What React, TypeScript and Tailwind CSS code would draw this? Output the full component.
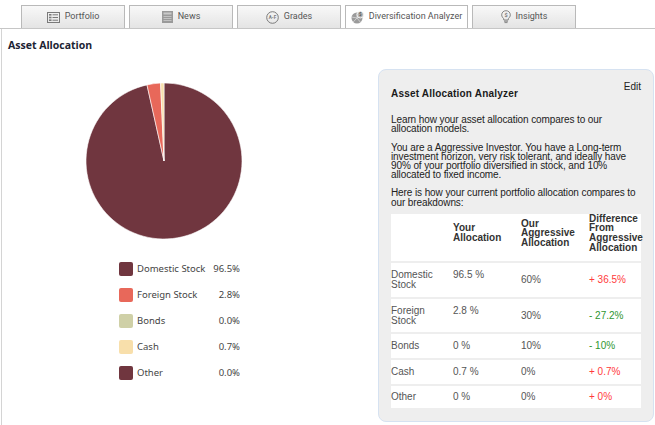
import React from 'react'

const slices = [
  { name: 'Domestic Stock', pct: 96.5, color: '#70363f' },
  { name: 'Foreign Stock', pct: 2.8, color: '#e8685a' },
  { name: 'Bonds', pct: 0.0, color: '#cfd0a7' },
  { name: 'Cash', pct: 0.7, color: '#f8dfab' },
  { name: 'Other', pct: 0.0, color: '#70363f' },
]

function pt(deg: number) {
  const r = (deg * Math.PI) / 180
  return [80 + 78 * Math.sin(r), 80 - 78 * Math.cos(r)]
}

function Pie() {
  let start = 0
  return (
    <svg width="160" height="160" viewBox="0 0 160 160">
      {slices.map((s) => {
        if (s.pct <= 0) return null
        const end = start + (s.pct / 100) * 360
        const [x1, y1] = pt(start)
        const [x2, y2] = pt(end)
        const large = end - start > 180 ? 1 : 0
        const d = `M80,80 L${x1},${y1} A78,78 0 ${large} 1 ${x2},${y2} Z`
        start = end
        return <path key={s.name} d={d} fill={s.color} stroke="#fff" strokeWidth="0.6" strokeLinejoin="round" />
      })}
    </svg>
  )
}

const PortfolioIcon = () => (
  <svg width="13" height="11" viewBox="0 0 13 11">
    <rect x="0.5" y="0.5" width="12" height="10" fill="none" stroke="#7a7a7a" />
    <rect x="2" y="2" width="2.5" height="1.6" fill="#7a7a7a" />
    <rect x="5.5" y="2.3" width="5.5" height="1" fill="#7a7a7a" />
    <rect x="2" y="4.7" width="2.5" height="1.6" fill="#7a7a7a" />
    <rect x="5.5" y="5" width="5.5" height="1" fill="#7a7a7a" />
    <rect x="2" y="7.4" width="2.5" height="1.6" fill="#7a7a7a" />
    <rect x="5.5" y="7.7" width="5.5" height="1" fill="#7a7a7a" />
  </svg>
)

const NewsIcon = () => (
  <svg width="11" height="12" viewBox="0 0 11 12">
    <rect x="0" y="0" width="11" height="12" fill="#9a9a9a" />
    <rect x="1.5" y="1.5" width="8" height="2" fill="#c9c9c9" />
    <rect x="1.5" y="5" width="8" height="1" fill="#c2c2c2" />
    <rect x="1.5" y="7" width="8" height="1" fill="#c2c2c2" />
    <rect x="1.5" y="9" width="8" height="1" fill="#c2c2c2" />
  </svg>
)

const GradesIcon = () => (
  <svg width="13" height="13" viewBox="0 0 13 13">
    <circle cx="6.5" cy="6.5" r="5.8" fill="none" stroke="#7a7a7a" strokeWidth="1" />
    <text x="6.5" y="8.2" textAnchor="middle" fontSize="4.6" fontWeight="bold" fill="#7a7a7a" fontFamily="Roboto, sans-serif">
      A-F
    </text>
  </svg>
)

const DiversIcon = () => (
  <svg width="13" height="13" viewBox="0 0 13 13">
    <circle cx="6" cy="7" r="5.5" fill="#9b9b9b" />
    <path d="M6 7 L6 1.5 M6 7 L11.2 5.5 M6 7 L9.5 11.3 M6 7 L2.2 11 M6 7 L0.6 6" stroke="#d8d8d8" strokeWidth="0.8" />
    <circle cx="9.3" cy="3.7" r="3.3" fill="#b5b5b5" stroke="#fff" strokeWidth="0.8" />
    <text x="9.3" y="5.3" textAnchor="middle" fontSize="4.5" fontWeight="bold" fill="#555" fontFamily="Roboto, sans-serif">
      $
    </text>
  </svg>
)

const InsightsIcon = () => (
  <svg width="10" height="14" viewBox="0 0 10 14">
    <path d="M5 0.7 C2.5 0.7 0.7 2.5 0.7 4.9 C0.7 6.6 1.7 7.6 2.6 8.6 L2.8 10 L7.2 10 L7.4 8.6 C8.3 7.6 9.3 6.6 9.3 4.9 C9.3 2.5 7.5 0.7 5 0.7 Z" fill="none" stroke="#7a7a7a" strokeWidth="0.9" />
    <path d="M3 11.2 L7 11.2 M3.5 12.6 L6.5 12.6" stroke="#7a7a7a" strokeWidth="0.9" />
    <text x="5" y="7" textAnchor="middle" fontSize="5.5" fontWeight="bold" fill="#7a7a7a" fontFamily="Roboto, sans-serif">
      $
    </text>
  </svg>
)

const tabs = [
  { label: 'Portfolio', icon: <PortfolioIcon />, w: 'w-[104px]' },
  { label: 'News', icon: <NewsIcon />, w: 'w-[104px]' },
  { label: 'Grades', icon: <GradesIcon />, w: 'w-[104px]' },
  { label: 'Diversification Analyzer', icon: <DiversIcon />, w: 'w-[123px]', active: true },
  { label: 'Insights', icon: <InsightsIcon />, w: 'w-[104px]' },
]

const rows = [
  { label: ['Domestic', 'Stock'], yours: '96.5 %', ours: '60%', diff: '+ 36.5%', up: true, h: 'h-[36.4px]' },
  { label: ['Foreign', 'Stock'], yours: '2.8 %', ours: '30%', diff: '- 27.2%', up: false, h: 'h-[35px]' },
  { label: ['Bonds'], yours: '0 %', ours: '10%', diff: '- 10%', up: false, h: 'h-[25.3px]' },
  { label: ['Cash'], yours: '0.7 %', ours: '0%', diff: '+ 0.7%', up: true, h: 'h-[26.3px]' },
  { label: ['Other'], yours: '0 %', ours: '0%', diff: '+ 0%', up: true, h: 'h-[22.4px]', last: true },
]

export default function App() {
  return (
    <div className="w-[655px] h-[425px] bg-white overflow-hidden font-['Liberation_Sans',Arial,sans-serif]">
      {/* tabs */}
      <div className="flex gap-[4px] pl-[21px] pt-[5px] border-b border-[#c6c6c6]">
        {tabs.map((t) => (
          <div
            key={t.label}
            className={`${t.w} h-[23px] flex items-center justify-center gap-[5px] border border-b-0 border-[#b9b9b9] font-['Roboto',sans-serif] text-[9px] text-[#555] ${
              t.active ? 'bg-white' : 'bg-gradient-to-b from-[#f8f8f8] to-[#e4e4e4]'
            }`}
          >
            {t.icon}
            <span>{t.label}</span>
          </div>
        ))}
      </div>

      <div className="flex ml-[1px] border-l border-[#d4d4d4] h-[396px]">
        {/* left column */}
        <div className="w-[376px] shrink-0 pt-[10px]">
          <div className="pl-[6px] h-[12px] leading-[12px] text-[10.5px] font-bold text-[#1c2433] font-['Open_Sans',sans-serif]">
            Asset Allocation
          </div>
          <div className="mt-[30px] ml-[82px]">
            <Pie />
          </div>
          <div className="mt-[15px] ml-[117px] w-[121px] flex flex-col font-['Noto_Sans',sans-serif] text-[9.5px] text-[#444]">
            {slices.map((s) => (
              <div key={s.name} className="h-[26px] flex items-center">
                <span className="w-[14px] h-[14px] rounded-[2px] mr-[4px]" style={{ backgroundColor: s.color }} />
                <span className="flex-1">{s.name}</span>
                <span>{s.pct.toFixed(1)}%</span>
              </div>
            ))}
          </div>
        </div>

        {/* analyzer panel */}
        <div className="w-[276px] shrink-0 mt-[40px] self-start rounded-[8px] border border-[#d6e2f1] bg-[#eeeeee] px-[12px] pt-[12px] pb-[13px] text-[10px] leading-[9.2px] text-[#222]">
          <div className="flex justify-between items-start">
            <div className="mt-[7px] font-bold tracking-[0.2px] text-[#1a1a1a]">Asset Allocation Analyzer</div>
            <div>Edit</div>
          </div>
          <p className="mt-[17px] tracking-[-0.1px]">Learn how your asset allocation compares to our allocation models.</p>
          <p className="mt-[9px] tracking-[-0.1px]">
            You are a Aggressive Investor. You have a Long-term investment horizon, very risk tolerant, and ideally have 90% of
            your portfolio diversified in stock, and 10% allocated to fixed income.
          </p>
          <p className="mt-[9px] tracking-[-0.1px]">Here is how your current portfolio allocation compares to our breakdowns:</p>

          <div className="mt-[7px] bg-white text-[#555] leading-[9.6px]">
            <div className="grid grid-cols-[62px_68px_68px_53px] h-[49px] pb-[9px] items-center border-b-2 border-[#eeeeee] font-bold text-[#333] leading-[9.6px]">
              <div />
              <div>
                Your
                <br />
                Allocation
              </div>
              <div>
                Our
                <br />
                Aggressive
                <br />
                Allocation
              </div>
              <div className="whitespace-nowrap">
                Difference
                <br />
                From
                <br />
                Aggressive
                <br />
                Allocation
              </div>
            </div>
            {rows.map((r) => (
              <div
                key={r.label.join(' ')}
                className={`grid grid-cols-[62px_68px_68px_53px] items-center ${r.h} ${r.last ? '' : 'border-b-2 border-[#eeeeee]'}`}
              >
                <div>
                  {r.label.map((l) => (
                    <div key={l}>{l}</div>
                  ))}
                </div>
                <div className={r.label.length > 1 ? 'self-start pt-[7px]' : ''}>{r.yours}</div>
                <div>{r.ours}</div>
                <div className={r.up ? 'text-[#ff3b3b]' : 'text-[#2f962f]'}>{r.diff}</div>
              </div>
            ))}
          </div>
        </div>
      </div>
    </div>
  )
}
